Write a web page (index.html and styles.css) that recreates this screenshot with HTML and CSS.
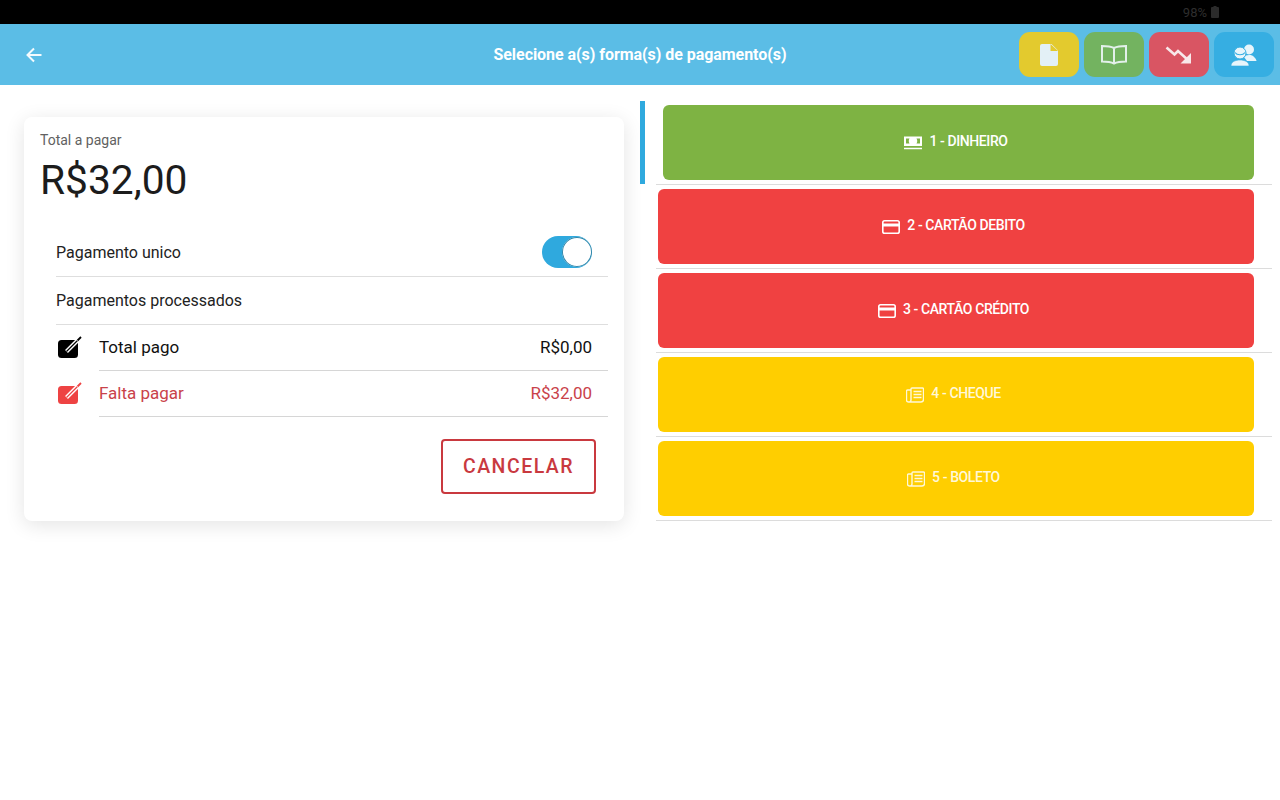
FILE: index.html
```html
<!DOCTYPE html>
<html lang="pt-BR">
<head>
<meta charset="utf-8">
<title>Pagamento</title>
<link rel="stylesheet" href="styles.css">
</head>
<body>
<div class="status"><span class="status-text">98%</span>
<svg class="battery" width="8" height="12" viewBox="0 0 8 12"><path d="M2.500 0h3v1H7a1 1 0 0 1 1 1v9a1 1 0 0 1-1 1H1a1 1 0 0 1-1-1V2a1 1 0 0 1 1-1h1.500z" fill="#2b2b2b"/></svg>
</div>
<header class="appbar">
  <svg class="back" width="20" height="20" viewBox="0 0 20 20"><path d="M17.500 10H3.500M10 3.500 3.500 10l6.500 6.500" fill="none" stroke="#f4fbfe" stroke-width="2"/></svg>
  <h1 class="title">Selecione a(s) forma(s) de pagamento(s)</h1>
  <div class="actions">
    <div class="action a-yellow"><svg width="18" height="22" viewBox="0 0 18 22"><path d="M2 0h9.500L18 6.500V20a2 2 0 0 1-2 2H2a2 2 0 0 1-2-2V2a2 2 0 0 1 2-2z" fill="#e3f0f6"/><path d="M10.500 0 18 7h-7.500z" fill="#e3ca2e"/></svg></div>
    <div class="action a-green"><svg width="26" height="20" viewBox="0 0 26 20"><path d="M13 3C10 1.500 6 1 1 1v15.500c5 0 9 .5 12 2 3-1.500 7-2 12-2V1C20 1 16 1.500 13 3zM13 3v15.500" fill="none" stroke="#e3f0ea" stroke-width="2"/></svg></div>
    <div class="action a-red"><svg width="28" height="18" viewBox="0 0 28 18"><path d="M1.500 1.500 9.500 8.500 13 5l10 9" fill="none" stroke="#f8e8ea" stroke-width="2.600"/><path d="M26 7v10.500H15.500z" fill="#f8e8ea"/></svg></div>
    <div class="action a-blue"><svg width="26" height="24" viewBox="0 0 26 24"><circle cx="18" cy="6.500" r="5" fill="#e8f5fb"/><path d="M13 14c1-2 8-3 10 0 1 1 2.500 2.500 2.500 4H16z" fill="#e8f5fb"/><circle cx="9" cy="10" r="6" fill="#e8f5fb" stroke="#36aee2" stroke-width="1"/><path d="M0 23c0-4 4-6 9-6s9 2 9 6z" fill="#e8f5fb" stroke="#36aee2" stroke-width=".6"/><path d="M4 9.500c2 3 8 3 10 0" fill="none" stroke="#36aee2" stroke-width="1.200"/></svg></div>
  </div>
</header>
<main class="content">
  <section class="left">
    <div class="card">
      <div class="card-label">Total a pagar</div>
      <div class="amount">R$32,00</div>
      <div class="row row-single">
        <span>Pagamento unico</span>
        <span class="switch"><span class="knob"></span></span>
      </div>
      <div class="row row-processed"><span>Pagamentos processados</span></div>
      <div class="line">
        <svg class="line-icon" width="26" height="24" viewBox="0 0 26 24"><rect x="2" y="5" width="20" height="18" rx="3.500" fill="#000"/><path d="M10.500 16.500 21 6" stroke="#fff" stroke-width="4"/><path d="M10.500 16.500 21 6" stroke="#000" stroke-width="1.200"/><path d="M21.500 5.500 25 2" stroke="#000" stroke-width="1.800"/></svg>
        <div class="line-body"><span>Total pago</span><span>R$0,00</span></div>
      </div>
      <div class="line line-red">
        <svg class="line-icon" width="26" height="24" viewBox="0 0 26 24"><rect x="2" y="5" width="20" height="18" rx="3.500" fill="#ee4343"/><path d="M10.500 16.500 21 6" stroke="#fff" stroke-width="4"/><path d="M10.500 16.500 21 6" stroke="#ee4343" stroke-width="1.200"/><path d="M21.500 5.500 25 2" stroke="#ee4343" stroke-width="1.800"/></svg>
        <div class="line-body"><span>Falta pagar</span><span>R$32,00</span></div>
      </div>
      <div class="card-foot"><button class="cancel">CANCELAR</button></div>
    </div>
  </section>
  <section class="right">
    <div class="method method-active"><div class="pay pay-green">
      <svg width="18" height="14" viewBox="0 0 18 14"><path d="M0 .5h18v9.500H0z" fill="#fff"/><path d="M2 2.500h3.500c-1 1.500-1 3.500 0 5H2zM16 2.500h-3.500c1 1.500 1 3.500 0 5H16z" fill="#7eb343"/><path d="M0 12.500h18" stroke="#fff" stroke-width="1.500"/></svg>
      <span>1 - DINHEIRO</span></div></div>
    <div class="method"><div class="pay pay-red">
      <svg width="18" height="14" viewBox="0 0 18 14"><rect x=".8" y=".8" width="16.400" height="12.400" rx="1.800" fill="none" stroke="#fff" stroke-width="1.600"/><path d="M1 3.500h16v3H1z" fill="#fff"/></svg>
      <span>2 - CARTÃO DEBITO</span></div></div>
    <div class="method"><div class="pay pay-red">
      <svg width="18" height="14" viewBox="0 0 18 14"><rect x=".8" y=".8" width="16.400" height="12.400" rx="1.800" fill="none" stroke="#fff" stroke-width="1.600"/><path d="M1 3.500h16v3H1z" fill="#fff"/></svg>
      <span>3 - CARTÃO CRÉDITO</span></div></div>
    <div class="method"><div class="pay pay-yellow">
      <svg width="18" height="16" viewBox="0 0 18 16"><path d="M5 3H1.500a1 1 0 0 0-1 1V13a2 2 0 0 0 2 2H15a2.500 2.500 0 0 0 2.500-2.500V2a1 1 0 0 0-1-1H6a1 1 0 0 0-1 1v11a2 2 0 0 1-2.500 2M7.500 4.500h8M7.500 7.500h8M7.500 10.500h8" fill="none" stroke="#fff8d8" stroke-width="1.400"/></svg>
      <span>4 - CHEQUE</span></div></div>
    <div class="method"><div class="pay pay-yellow">
      <svg width="18" height="16" viewBox="0 0 18 16"><path d="M5 3H1.500a1 1 0 0 0-1 1V13a2 2 0 0 0 2 2H15a2.500 2.500 0 0 0 2.500-2.500V2a1 1 0 0 0-1-1H6a1 1 0 0 0-1 1v11a2 2 0 0 1-2.500 2M7.500 4.500h8M7.500 7.500h8M7.500 10.500h8" fill="none" stroke="#fff8d8" stroke-width="1.400"/></svg>
      <span>5 - BOLETO</span></div></div>
  </section>
</main>
</body>
</html>
```
FILE: styles.css
```css
* { box-sizing: border-box; }
html, body { margin: 0; height: 100%; }
body { background: #fff; font-family: Roboto, "Liberation Sans", sans-serif; color: #1c1c1c; overflow: hidden; }
.status { height: 24px; background: #000; display: flex; align-items: center; justify-content: flex-end; gap: 4px; padding: 0 61px 0 0; }
.status-text { font-size: 13px; color: #2e2e2e; }
.battery { display: block; }
.appbar { height: 61px; background: #5bbde6; display: flex; align-items: center; position: relative; padding: 0 6px 0 24px; }
.back { display: block; }
.title { position: absolute; left: 0; right: 0; top: 0; margin: 0; text-align: center; font-size: 16px; line-height: 61px; font-weight: 700; color: #fff; letter-spacing: -.05px; }
.actions { margin-left: auto; display: flex; gap: 5px; position: relative; }
.action { width: 60px; height: 45px; border-radius: 11px; display: flex; align-items: center; justify-content: center; }
.a-yellow { background: #e3ca2e; }
.a-green { background: #73b360; }
.a-red { background: #d95563; }
.a-blue { background: #36aee2; }
.content { display: flex; align-items: flex-start; }
.left { width: 640px; padding: 32px 16px 0 24px; }
.card { height: 404px; background: #fff; border-radius: 8px; box-shadow: 0 4px 20px rgba(0,0,0,.11); padding: 16px 16px 0 16px; }
.card-label { font-size: 14px; line-height: 15px; color: #616161; }
.amount { font-size: 40.700px; line-height: 44px; margin-top: 10px; color: #1c1c1c; }
.row { margin-left: 16px; display: flex; align-items: center; justify-content: space-between; font-size: 16px; color: #222; border-bottom: 1px solid #dedede; padding-right: 16px; }
.row-single { height: 48px; margin-top: 27px; }
.row-processed { height: 48px; }
.switch { width: 50px; height: 32px; border-radius: 16px; background: #2fa9de; position: relative; display: block; margin-top: -2px; }
.knob { position: absolute; right: 0; top: 1px; width: 30px; height: 30px; border-radius: 50%; background: #fff; box-shadow: 0 0 0 1px #2c86ab inset; }
.line { display: flex; align-items: center; margin-left: 16px; height: 46px; font-size: 17px; color: #111; }
.line-icon { flex: none; display: block; margin: 0 17px 2px 0; }
.line-body { flex: 1; height: 46px; display: flex; align-items: center; justify-content: space-between; padding: 0 16px 2px 0; border-bottom: 1px solid #d6d6d6; }
.line-red { color: #c9424a; }
.card-foot { display: flex; justify-content: flex-end; padding-right: 12px; margin-top: 22px; }
.cancel { width: 155px; height: 55px; background: #fff; border: 2px solid #c9393f; border-radius: 4px; color: #c9393f; font: 500 19.500px Roboto, "Liberation Sans", sans-serif; letter-spacing: 1.500px; padding: 0; }
.right { flex: 1; padding: 16px 8px 0 0; }
.method { height: 84px; margin-left: 16px; padding: 4px 18px 4px 2px; border-bottom: 1px solid #dcdcdc; }
.method-active { position: relative; padding-left: 7px; }
.method-active::before { content: ""; position: absolute; left: -16px; top: 0; bottom: 0; width: 5px; background: #2fa9de; }
.pay { height: 75px; border-radius: 6px; display: flex; align-items: center; justify-content: center; gap: 7px; padding-right: 5px; font-size: 14px; line-height: 13px; font-weight: 500; color: #fff; letter-spacing: -.4px; }
.pay span { position: relative; top: -1px; }
.pay svg { display: block; flex: none; }
.pay-green { background: #7eb343; }
.pay-red { background: #f04141; }
.pay-yellow { background: #ffce00; color: #fff8d8; }
```
